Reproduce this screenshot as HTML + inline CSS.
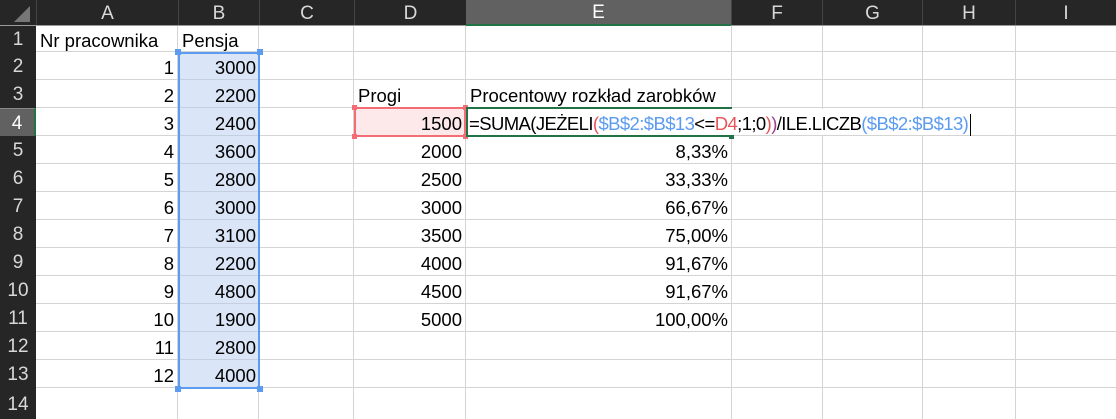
<!DOCTYPE html>
<html><head><meta charset="utf-8"><style>
*{margin:0;padding:0;box-sizing:border-box}
body{width:1116px;height:419px;overflow:hidden;background:#fff;position:relative;font-family:"Liberation Sans",sans-serif}
.hd{position:absolute;background:#262626;color:#d8d8d8;font-size:19px;display:flex;align-items:center;justify-content:center;padding-top:2px}
.h{position:absolute;left:36px;width:1080px;height:1px;background:#d4d4d4}
.v{position:absolute;top:26px;width:1px;height:393px;background:#d4d4d4}
.c{position:absolute;height:28px;line-height:32px;font-size:18.5px;color:#000;white-space:nowrap}
.r{text-align:right;padding-right:4px}
.l{padding-left:4px}
</style></head><body>
<div class="hd" style="left:0;top:0;width:1116px;height:26px;border-bottom:1px solid #9a9a9a"></div>
<div style="position:absolute;left:14px;top:6px;width:0;height:0;border-left:16px solid transparent;border-bottom:16px solid #777"></div>
<div class="hd" style="left:36px;top:0;width:142px;height:25px;border-left:1px solid #444">A</div>
<div class="hd" style="left:178px;top:0;width:81px;height:25px;border-left:1px solid #444">B</div>
<div class="hd" style="left:259px;top:0;width:95px;height:25px;border-left:1px solid #444">C</div>
<div class="hd" style="left:354px;top:0;width:112px;height:25px;border-left:1px solid #444">D</div>
<div class="hd" style="left:466px;top:0;width:265px;height:26px;background:#616161;color:#fff;border-bottom:2px solid #217346">E</div>
<div class="hd" style="left:731px;top:0;width:91px;height:25px;border-left:1px solid #444">F</div>
<div class="hd" style="left:822px;top:0;width:100px;height:25px;border-left:1px solid #444">G</div>
<div class="hd" style="left:922px;top:0;width:93px;height:25px;border-left:1px solid #444">H</div>
<div class="hd" style="left:1015px;top:0;width:101px;height:25px;border-left:1px solid #444">I</div>
<div class="hd" style="left:0;top:26px;width:36px;height:393px"></div>
<div class="hd" style="left:0;top:26px;width:36px;height:26px">1</div>
<div class="hd" style="left:0;top:52px;width:36px;height:28px">2</div>
<div class="hd" style="left:0;top:80px;width:36px;height:28px">3</div>
<div class="hd" style="left:0;top:108px;width:36px;height:29px;background:#616161;color:#fff;border-right:2px solid #217346;border-top:1px solid #888;border-bottom:1px solid #888">4</div>
<div class="hd" style="left:0;top:136px;width:36px;height:28px">5</div>
<div class="hd" style="left:0;top:164px;width:36px;height:28px">6</div>
<div class="hd" style="left:0;top:192px;width:36px;height:28px">7</div>
<div class="hd" style="left:0;top:220px;width:36px;height:28px">8</div>
<div class="hd" style="left:0;top:248px;width:36px;height:28px">9</div>
<div class="hd" style="left:0;top:276px;width:36px;height:28px">10</div>
<div class="hd" style="left:0;top:304px;width:36px;height:28px">11</div>
<div class="hd" style="left:0;top:332px;width:36px;height:28px">12</div>
<div class="hd" style="left:0;top:360px;width:36px;height:28px">13</div>
<div class="hd" style="left:0;top:388px;width:36px;height:31px">14</div>
<div class="h" style="top:51px"></div><div class="h" style="top:79px"></div><div class="h" style="top:107px"></div><div class="h" style="top:135px"></div><div class="h" style="top:163px"></div><div class="h" style="top:191px"></div><div class="h" style="top:219px"></div><div class="h" style="top:247px"></div><div class="h" style="top:275px"></div><div class="h" style="top:303px"></div><div class="h" style="top:331px"></div><div class="h" style="top:359px"></div><div class="h" style="top:387px"></div>
<div class="v" style="left:177px"></div><div class="v" style="left:258px"></div><div class="v" style="left:353px"></div><div class="v" style="left:465px"></div><div class="v" style="left:731px"></div><div class="v" style="left:822px"></div><div class="v" style="left:922px"></div><div class="v" style="left:1015px"></div>
<div style="position:absolute;left:178px;top:52px;width:82px;height:337px;background:#dae6f7;border:2px solid #5b9bf0"></div>
<div style="position:absolute;left:180px;top:79px;width:78px;height:308px;background-image:repeating-linear-gradient(to bottom,#c4cfdf 0,#c4cfdf 1px,transparent 1px,transparent 28px)"></div>
<div style="position:absolute;left:175px;top:49px;width:6px;height:6px;background:#5b9bf0"></div>
<div style="position:absolute;left:257px;top:49px;width:6px;height:6px;background:#5b9bf0"></div>
<div style="position:absolute;left:175px;top:386px;width:6px;height:6px;background:#5b9bf0"></div>
<div style="position:absolute;left:257px;top:386px;width:6px;height:6px;background:#5b9bf0"></div>
<div style="position:absolute;left:354px;top:107px;width:112px;height:30px;background:#fde9ea;border:2px solid #f26d74"></div>
<div style="position:absolute;left:352px;top:105px;width:5px;height:5px;background:#f26d74"></div>
<div style="position:absolute;left:463px;top:105px;width:5px;height:5px;background:#f26d74"></div>
<div style="position:absolute;left:352px;top:134px;width:5px;height:5px;background:#f26d74"></div>
<div style="position:absolute;left:463px;top:134px;width:5px;height:5px;background:#f26d74"></div>
<div style="position:absolute;left:466px;top:107px;width:266px;height:2px;background:#217346"></div>
<div style="position:absolute;left:466px;top:135px;width:266px;height:2px;background:#217346"></div>
<div style="position:absolute;left:466px;top:108px;width:2px;height:28px;background:#217346"></div>
<div style="position:absolute;left:729px;top:134px;width:5px;height:5px;background:#217346"></div>
<div style="position:absolute;left:468px;top:109px;width:494px;height:26px;background:#fff"></div>
<div class="c l" style="left:36px;top:26px;height:26px;line-height:30px">Nr pracownika</div>
<div class="c l" style="left:178px;top:26px;height:26px;line-height:30px">Pensja</div>
<div class="c r" style="left:36px;top:52px;width:142px">1</div><div class="c r" style="left:178px;top:52px;width:82px">3000</div>
<div class="c r" style="left:36px;top:80px;width:142px">2</div><div class="c r" style="left:178px;top:80px;width:82px">2200</div>
<div class="c r" style="left:36px;top:108px;width:142px">3</div><div class="c r" style="left:178px;top:108px;width:82px">2400</div>
<div class="c r" style="left:36px;top:136px;width:142px">4</div><div class="c r" style="left:178px;top:136px;width:82px">3600</div>
<div class="c r" style="left:36px;top:164px;width:142px">5</div><div class="c r" style="left:178px;top:164px;width:82px">2800</div>
<div class="c r" style="left:36px;top:192px;width:142px">6</div><div class="c r" style="left:178px;top:192px;width:82px">3000</div>
<div class="c r" style="left:36px;top:220px;width:142px">7</div><div class="c r" style="left:178px;top:220px;width:82px">3100</div>
<div class="c r" style="left:36px;top:248px;width:142px">8</div><div class="c r" style="left:178px;top:248px;width:82px">2200</div>
<div class="c r" style="left:36px;top:276px;width:142px">9</div><div class="c r" style="left:178px;top:276px;width:82px">4800</div>
<div class="c r" style="left:36px;top:304px;width:142px">10</div><div class="c r" style="left:178px;top:304px;width:82px">1900</div>
<div class="c r" style="left:36px;top:332px;width:142px">11</div><div class="c r" style="left:178px;top:332px;width:82px">2800</div>
<div class="c r" style="left:36px;top:360px;width:142px">12</div><div class="c r" style="left:178px;top:360px;width:82px">4000</div>
<div class="c l" style="left:354px;top:80px">Progi</div>
<div class="c l" style="left:466px;top:80px">Procentowy rozkład zarobków</div>
<div class="c r" style="left:354px;top:108px;width:112px">1500</div>
<div class="c r" style="left:354px;top:136px;width:112px">2000</div><div class="c r" style="left:466px;top:136px;width:266px">8,33%</div>
<div class="c r" style="left:354px;top:164px;width:112px">2500</div><div class="c r" style="left:466px;top:164px;width:266px">33,33%</div>
<div class="c r" style="left:354px;top:192px;width:112px">3000</div><div class="c r" style="left:466px;top:192px;width:266px">66,67%</div>
<div class="c r" style="left:354px;top:220px;width:112px">3500</div><div class="c r" style="left:466px;top:220px;width:266px">75,00%</div>
<div class="c r" style="left:354px;top:248px;width:112px">4000</div><div class="c r" style="left:466px;top:248px;width:266px">91,67%</div>
<div class="c r" style="left:354px;top:276px;width:112px">4500</div><div class="c r" style="left:466px;top:276px;width:266px">91,67%</div>
<div class="c r" style="left:354px;top:304px;width:112px">5000</div><div class="c r" style="left:466px;top:304px;width:266px">100,00%</div>
<div class="c" style="left:469px;top:108px;letter-spacing:-0.6px">=SUMA(JEŻELI<span style="color:#e8545c">(</span><span style="color:#5b9bf0">$B$2:$B$13</span>&lt;=<span style="color:#e8545c">D4</span>;1;0<span style="color:#e8545c">)</span><span style="color:#a04090">)</span>/ILE.LICZB<span style="color:#5b9bf0">(</span><span style="color:#5b9bf0">$B$2:$B$13</span><span style="color:#5b9bf0">)</span><span style="display:inline-block;width:1px;height:22px;background:#000;vertical-align:middle;margin-left:2px"></span></div>
</body></html>
